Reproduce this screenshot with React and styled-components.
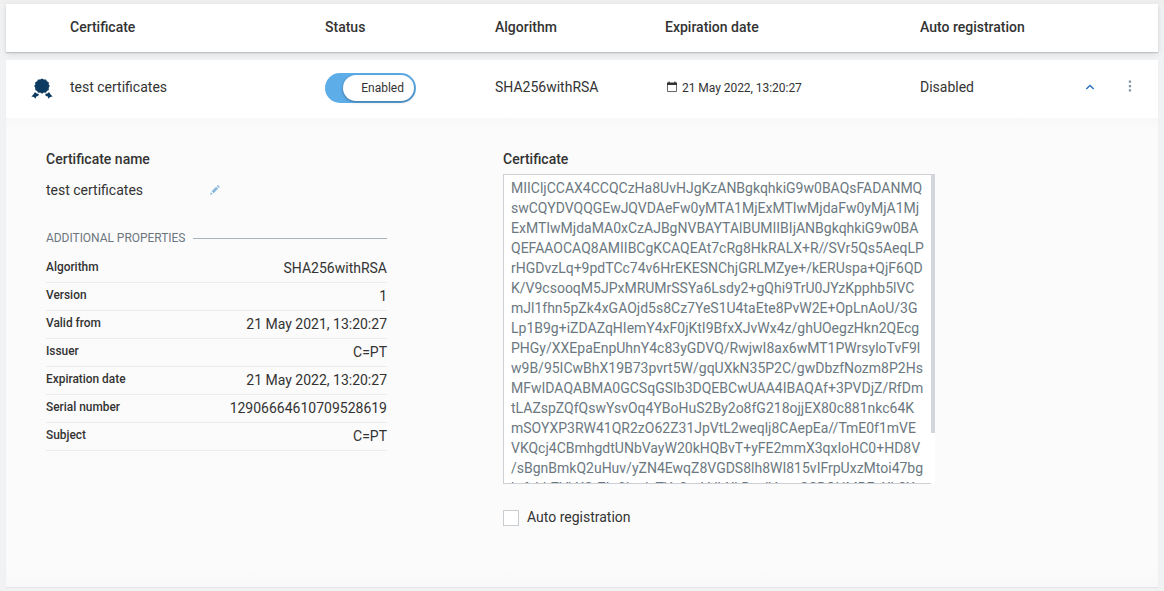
import React from 'react';
import styled, { createGlobalStyle, css } from 'styled-components';

const GlobalStyle = createGlobalStyle`
  *, *::before, *::after { box-sizing: border-box; }
  body {
    margin: 0;
    min-height: 591px;
    overflow: hidden;
    background: #f0f2f5;
    color: #333;
    font: 14px/20px Roboto, "Liberation Sans", sans-serif;
  }
`;

const Page = styled.main`
  display: flex;
  flex-direction: column;
  gap: 8px;
  height: 591px;
  padding: 4px 6px 4px;
  background: linear-gradient(#efefef 0 4px, #f0f2f4 4px);
`;

const columns = css`
  display: grid;
  grid-template-columns: 64px 255px 170px 170px 255px 150px 1fr;
  align-items: center;
`;

const TableHeader = styled.header`
  ${columns}
  height: 48px;
  flex: none;
  padding-bottom: 2px;
  background: #fff;
  box-shadow: 0 1px 1px rgba(0, 0, 0, 0.14), 0 2px 6px rgba(0, 0, 0, 0.1);
  font-weight: 500;
`;

const Card = styled.section`
  flex: 1;
  display: flex;
  flex-direction: column;
  background: #fbfbfb;
  box-shadow: 0 1px 1px rgba(0, 0, 0, 0.05);
`;

const Row = styled.div`
  ${columns}
  height: 58px;
  flex: none;
  background: #fff;
`;

const Cell = styled.div`
  padding-bottom: 4px;
`;

const IconCell = styled.div`
  display: flex;
  padding-left: 25px;
`;

const Toggle = styled.button`
  display: flex;
  justify-content: flex-end;
  width: 91px;
  height: 30px;
  padding: 2px;
  margin-top: -2px;
  border: 0;
  border-radius: 15px;
  background: #5dade9;
`;

const Thumb = styled.span`
  display: flex;
  align-items: center;
  justify-content: flex-end;
  width: 71px;
  height: 26px;
  padding-right: 10px;
  border-radius: 13px;
  background: #fff;
  box-shadow: 0 1px 3px rgba(0, 0, 0, 0.35);
  color: #333;
  font: 12px/16px Roboto, sans-serif;
`;

const DateCell = styled.div`
  display: flex;
  align-items: center;
  gap: 5px;
  padding: 0 0 3px 1px;
  font-size: 12px;
  letter-spacing: -0.04px;
  svg { margin-top: -2px; }
`;

const Actions = styled.div`
  display: flex;
  align-items: center;
  gap: 33px;
  padding: 0 0 4px 15px;
  svg + svg { margin-top: -2px; }
`;

const Details = styled.div`
  flex: 1;
  display: flex;
  gap: 116px;
  padding: 31px 40px 0;
  background: linear-gradient(#f8f8f8, #fbfbfb 12px, #fbfbfb calc(100% - 16px), #f8f8f8);
`;

const InfoColumn = styled.div`
  width: 341px;
`;

const CertificateColumn = styled.div`
  width: 432px;
`;

const Label = styled.div`
  font-weight: 500;
`;

const NameLine = styled.div`
  display: flex;
  align-items: center;
  width: 174px;
  justify-content: space-between;
  margin-top: 11px;
`;

const SectionTitle = styled.h2`
  display: flex;
  align-items: center;
  gap: 8px;
  margin: 28px 0 7px;
  color: #6b7780;
  font-size: 12px;
  font-weight: 400;
  line-height: 20px;
  letter-spacing: -0.04px;
  text-transform: uppercase;
  &::after {
    content: "";
    flex: 1;
    height: 1px;
    margin-top: 1px;
    background: #a9b2bc;
  }
`;

const Property = styled.div`
  display: flex;
  justify-content: space-between;
  height: 28px;
  padding-top: 3px;
  border-bottom: 1px solid #ececec;
`;

const PropertyName = styled.span`
  font-size: 11.9px;
  font-weight: 500;
  line-height: 20px;
  margin-top: -1px;
`;

const PropertyValue = styled.span`
  line-height: 20px;
`;

const CertificateBox = styled.div`
  display: flex;
  height: 310px;
  margin-top: 5px;
  background: #fff;
`;

const CertificateText = styled.div`
  width: 428px;
  height: 310px;
  padding: 3px 0 0 7px;
  overflow: hidden;
  border: 1px solid #ccd0d4;
  border-right: 0;
  color: #6b7880;
  white-space: pre;
`;

const ScrollThumb = styled.div`
  width: 4px;
  height: 259px;
  background: #d3d7db;
`;

const CheckLabel = styled.label`
  display: flex;
  align-items: center;
  gap: 8px;
  margin-top: 23px;
`;

const Checkbox = styled.input`
  appearance: none;
  width: 16px;
  height: 16px;
  margin: 2px 0 0;
  border: 1px solid #c8cdd2;
  background: #fff;
`;

const BadgeIcon = () => (
  <svg width="22" height="22" viewBox="0 0 22 22" fill="#0c3a60">
    <path d="M11 .5l1.800 1.100 2.100-.2 1 1.900 1.900 1-.1 2.100L18.800 8l-1.100 1.800.1 2.100-1.900 1-1 1.900-2.100-.2L11 15.700l-1.800-1.100-2.100.2-1-1.900-1.900-1 .1-2.100L3.200 8l1.100-1.600-.1-2.100 1.900-1 1-1.900 2.100.2z" />
    <path d="M4 13.900l1.100 1.300 2.700.9-.6 1.900-2 .4-.7 2.300-1.600-1.800-2.500-.4 1.800-1.700zM18 13.900l-1.100 1.300-2.700.9.6 1.900 2 .4.700 2.300 1.600-1.800 2.500-.4-1.800-1.700z" />
  </svg>
);

const CalendarIcon = () => (
  <svg width="11" height="12" viewBox="0 0 11 12">
    <path d="M1.500 2.500h9v8h-9z" fill="none" stroke="#666" />
    <path d="M1 1.500h10v2.500H1zM2.500 .5h1.200v1H2.500zM8.300 .5h1.200v1H8.300z" fill="#333" />
  </svg>
);

const ChevronIcon = () => (
  <svg width="10" height="8" viewBox="0 0 10 8" fill="none" stroke="#2671bd" strokeWidth="1.4">
    <path d="M1.300 6L5 2.500 8.700 6" />
  </svg>
);

const MenuIcon = () => (
  <svg width="4" height="14" viewBox="0 0 4 14" fill="#8494a5">
    <path d="M.8 1.400h2.300v2.300H.8zM.8 5.900h2.300v2.300H.8zM.8 10.300h2.300v2.300H.8z" />
  </svg>
);

const PencilIcon = () => (
  <svg width="10" height="10" viewBox="0 0 10 10" fill="#86b8e0">
    <path d="M1.600 6.300l4.500-4.500 2 2-4.500 4.500zM6.800 1.100L7.900.1l2 2-1.100 1zM.1 9.900l.8-2.600 1.800 1.800z" />
  </svg>
);

const properties = [
  ['Algorithm', 'SHA256withRSA'],
  ['Version', '1'],
  ['Valid from', '21 May 2021, 13:20:27'],
  ['Issuer', 'C=PT'],
  ['Expiration date', '21 May 2022, 13:20:27'],
  ['Serial number', '12906664610709528619'],
  ['Subject', 'C=PT'],
];

const certificate = [
  'MIICljCCAX4CCQCzHa8UvHJgKzANBgkqhkiG9w0BAQsFADANMQ',
  'swCQYDVQQGEwJQVDAeFw0yMTA1MjExMTIwMjdaFw0yMjA1Mj',
  'ExMTIwMjdaMA0xCzAJBgNVBAYTAlBUMIIBIjANBgkqhkiG9w0BA',
  'QEFAAOCAQ8AMIIBCgKCAQEAt7cRg8HkRALX+R//SVr5Qs5AeqLP',
  'rHGDvzLq+9pdTCc74v6HrEKESNChjGRLMZye+/kERUspa+QjF6QD',
  'K/V9csooqM5JPxMRUMrSSYa6Lsdy2+gQhi9TrU0JYzKpphb5lVC',
  'mJl1fhn5pZk4xGAOjd5s8Cz7YeS1U4taEte8PvW2E+OpLnAoU/3G',
  'Lp1B9g+iZDAZqHIemY4xF0jKtI9BfxXJvWx4z/ghUOegzHkn2QEcg',
  'PHGy/XXEpaEnpUhnY4c83yGDVQ/RwjwI8ax6wMT1PWrsyloTvF9l',
  'w9B/95ICwBhX19B73pvrt5W/gqUXkN35P2C/gwDbzfNozm8P2Hs',
  'MFwIDAQABMA0GCSqGSIb3DQEBCwUAA4IBAQAf+3PVDjZ/RfDm',
  'tLAZspZQfQswYsvOq4YBoHuS2By2o8fG218ojjEX80c881nkc64K',
  'mSOYXP3RW41QR2zO62Z31JpVtL2weqlj8CAepEa//TmE0f1mVE',
  'VKQcj4CBmhgdtUNbVayW20kHQBvT+yFE2mmX3qxIoHC0+HD8V',
  '/sBgnBmkQ2uHuv/yZN4EwqZ8VGDS8lh8WI815vIFrpUxzMtoi47bg',
  'htfchhZVkXCtZLr0hvdcTYs2zxVdbXkBwdVuuu2CRGHMBFuXh2X',
].join('\n');

export default function App() {
  return (
    <>
      <GlobalStyle />
      <Page>
        <TableHeader>
          <span />
          <span>Certificate</span>
          <span>Status</span>
          <span>Algorithm</span>
          <span>Expiration date</span>
          <span>Auto registration</span>
        </TableHeader>
        <Card>
          <Row>
            <IconCell><BadgeIcon /></IconCell>
            <Cell>test certificates</Cell>
            <Toggle><Thumb>Enabled</Thumb></Toggle>
            <Cell>SHA256withRSA</Cell>
            <DateCell><CalendarIcon />21 May 2022, 13:20:27</DateCell>
            <Cell>Disabled</Cell>
            <Actions><ChevronIcon /><MenuIcon /></Actions>
          </Row>
          <Details>
            <InfoColumn>
              <Label>Certificate name</Label>
              <NameLine>test certificates<PencilIcon /></NameLine>
              <SectionTitle>Additional properties</SectionTitle>
              {properties.map(([name, value]) => (
                <Property key={name}>
                  <PropertyName>{name}</PropertyName>
                  <PropertyValue>{value}</PropertyValue>
                </Property>
              ))}
            </InfoColumn>
            <CertificateColumn>
              <Label>Certificate</Label>
              <CertificateBox>
                <CertificateText>{certificate}</CertificateText>
                <ScrollThumb />
              </CertificateBox>
              <CheckLabel><Checkbox type="checkbox" />Auto registration</CheckLabel>
            </CertificateColumn>
          </Details>
        </Card>
      </Page>
    </>
  );
}
